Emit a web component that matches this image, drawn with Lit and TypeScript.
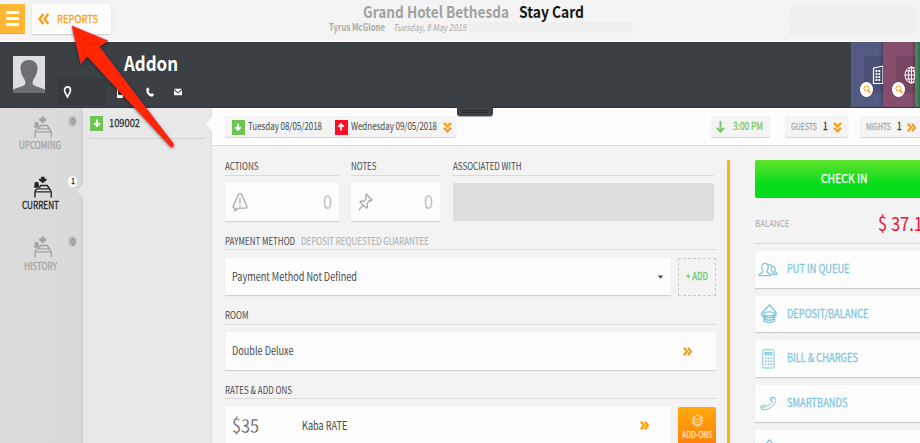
import { LitElement, html, css, svg, nothing, TemplateResult } from "lit";
import { customElement, property } from "lit/decorators.js";

// Condensed text run: the glyphs are squeezed into the given width,
// the box is exactly as high as a capital letter.
@customElement('fit-text')
export class FitText extends LitElement{
    static styles = css`
        :host{
            display: block;
            flex: none;
        }

        svg{
            display: block;
            overflow: visible;
        }

        text{
            fill: currentColor;
            stroke: var(--outline, none);
            stroke-width: var(--outline-width, 0);
        }
    `

    @property()
    text!: string;

    @property({ type: Number })
    width!: number;

    @property({ type: Number })
    cap = 7.3;

    render() {
        return html`
            <svg width=${this.width} height=${this.cap}>
                <text x="0" y=${this.cap} font-size=${this.cap / 0.733}
                      textLength=${this.width} lengthAdjust="spacingAndGlyphs">${this.text}</text>
            </svg>
        `
    }
}

const fit = (text: string, width: number, cap = 7.3, cls = '') =>
    html`<fit-text class=${cls} .text=${text} .width=${width} .cap=${cap}></fit-text>`;

const icon = (w: number, h: number, body: TemplateResult | unknown, cls = '') =>
    html`<svg class="icon ${cls}" width=${w} height=${h} viewBox="0 0 ${w} ${h}">${body}</svg>`;

const chevrons = (cls = '') => icon(9, 9, svg`<path d="M.9.7 4 4.5.9 8.3M4.900.7 8 4.500 4.900 8.300" stroke-width="2.200"/>`, `orange ${cls}`);
const chevronsDown = () => icon(9, 11, svg`<path d="M.9 1 4.5 4.4 8.1 1M.9 5.8 4.5 9.3 8.1 5.8" stroke-width="2.3"/>`, 'orange');
const arrowDown = () => icon(8, 8, svg`<path d="M4 .5v6.300M1.300 4.200 4 7l2.700-2.800" stroke-width="1.700"/>`);
const arrowUp = () => icon(8, 8, svg`<path d="M4 7.500V1.200M1.300 3.800 4 1l2.700 2.800" stroke-width="1.700"/>`);

const bed = () => icon(19, 22, svg`
    <path class="solid" d="M9.800 7.200 6 4.300V2.800h2V.7h3.600v2.100h2v1.500z"/>
    <path class="solid" d="M2 6h3.200l1.300 5.700H.9z"/>
    <path d="M6.500 11.800 7.600 9.500h6.600l2.400 3.200M2 21.500v-5.200q0-2 2-3.400h12.200q2 1.200 2 3.400v5.200M2.200 15.900h15.800" stroke-width="1.400"/>`);

const people = () => icon(20, 15, svg`
    <path stroke-width="1.200" d="M1 13.700c0-3 4-2.500 4.200-4.300C3 6.500 3.300 1.400 7 1.400S11 6.500 8.700 9.400c.2 1.800 4 1.300 4 4.300zM10 3.200c2.600-1.500 4.800 1.200 3 4.800.3 1.500 3 1.500 3.200 4.300h-3M14 4.500c2.400-.8 4 1.500 2.500 4.300.2 1.200 2.200 1.400 2.500 3.500h-2.500"/>`);
const coins = () => icon(17, 20, svg`
    <path d="M1 10 9.500.9 16 8.600v2.600l-1.500 1M1 10l3 3.500" stroke-width="1.400"/>
    <ellipse cx="9.300" cy="9.700" rx="5.200" ry="1.900" stroke-width="1.200"/>
    <path d="M4.100 9.700v7.300q5.200 3.200 10.400 0V9.700M4.100 12.200q5.200 3 10.400 0M4.100 14.700q5.200 3 10.400 0" stroke-width="1.400"/>`);
const calculator = () => icon(13, 20, svg`
    <rect x=".8" y=".8" width="11.200" height="18.200" rx="1.200"/>
    <rect class="tint" x="3" y="3.600" width="7" height="2.200"/>
    <path d="M3 9.200h7.500M3 12.200h7.500M3 15.200h7.500" stroke-width="1.600" stroke-dasharray="1.600 1.200"/>`);
const handset = () => icon(17, 15, svg`
    <path d="M1 10.200C.5 12.500 2 14.200 5.200 13.800 10.500 13 15.300 8.500 15.800 4.500L14.500 1.200 10.600 1.700l.1 3 1.800.8C11 8.300 8.500 10 5.700 10.300L4.600 8.700zM1 10.200l1 2 3.700-1.900M10.700 4.700 14.500 1.200"/>`);
const house = () => icon(17, 19, svg`<path d="M1 9.500 9.500.9 16 8.600" stroke-width="1.300"/>`);

const magnifier = () => icon(8, 9, svg`<circle cx="3.400" cy="3.400" r="2.500"/><path d="M5.200 5.500 7.200 8.200" stroke-width="1.500"/>`, 'orange');

@customElement('app-root')
export class AppRoot extends LitElement{
    static styles = css`
        :host{
            display: block;
            position: relative;
            width: 920px;
            height: 443px;
            overflow: hidden;
            background: #f3f3f3;
            color: #46484a;
            font-family: "Noto Sans CJK SC", "Open Sans", sans-serif;
        }

        *{
            box-sizing: border-box;
        }

        .icon{
            display: block;
            flex: none;
            fill: none;
            stroke: currentColor;
            stroke-width: 1;
        }

        .icon .solid{
            fill: currentColor;
            stroke: none;
        }

        .icon .tint{
            fill: #bfe1ec;
        }

        .orange{ color: #ff9c0c; }
        .green{ color: #76c765; }
        .grey{ color: #a9a9a9; }
        .bold{ font-weight: 700; }
        .italic{ font-style: italic; }

        .medium{
            --outline: currentColor;
            --outline-width: 0.28px;
        }

        .light{
            --outline: #fdfdfd;
            --outline-width: 0.35px;
        }

        .top{
            display: grid;
            grid-template-columns: 329px 460px 131px;
            height: 42px;
            background: #f4f4f4;
            border-bottom: 1px solid #fff;
        }

        .nav{
            display: flex;
            gap: 7px;
            padding-top: 4px;
        }

        .burger{
            display: flex;
            flex-direction: column;
            justify-content: center;
            gap: 3px;
            width: 25px;
            height: 29px;
            padding-left: 6px;
            background: #ffb734;
            box-shadow: 0 1px 1px #d5a650;
            border-radius: 0 1px 1px 0;
        }

        .burger i{
            width: 13px;
            height: 3px;
            background: #fff;
            border-radius: 1px;
        }

        .reports{
            display: flex;
            align-items: center;
            gap: 7px;
            width: 79px;
            height: 30px;
            padding: 0 0 1px 6px;
            background: #fdfdfd;
            border-radius: 1px;
            box-shadow: 0 1px 2px #ccc;
        }

        .titles{
            display: flex;
            flex-direction: column;
            gap: 6px;
            padding-top: 6px;
        }

        .title{
            display: flex;
            gap: 10px;
            padding-left: 34px;
            color: #a1a1a1;
        }

        .title .dark{
            color: #151515;
        }

        .subtitle{
            display: flex;
            gap: 8px;
            color: #aaa;
        }

        .blank{
            width: 165px;
            height: 11px;
            margin: -2px 0 -4px -6px;
            background: #efefef;
        }

        .cloud{
            width: 128px;
            height: 31px;
            margin-top: 5px;
            background: #efefef;
            border-radius: 8px;
        }

        .guest{
            display: flex;
            height: 66px;
            background: #3b4044;
            border-bottom: 1px solid #32363a;
            color: #fff;
        }

        .avatar{
            width: 32px;
            height: 37px;
            margin: 14px 13px 0;
            background: #dedede;
        }

        .contact{
            display: flex;
            flex-direction: column;
            flex: 1;
            padding-top: 14px;
        }

        .name{
            padding-left: 66px;
        }

        .links{
            display: flex;
            align-items: center;
            height: 26px;
            margin-top: 8px;
        }

        .address{
            display: flex;
            align-items: center;
            width: 49px;
            height: 26px;
            margin-right: 10px;
            padding-left: 5px;
            background: #373b3f;
        }

        .mobile{ margin-right: 23px; }
        .phone{ margin-right: 20px; }

        .module{
            display: flex;
            flex: none;
            flex-direction: column;
            width: 32px;
            padding: 14px 0 0 13px;
            overflow: hidden;
            box-shadow: inset -3px 0 3px -2px rgba(0, 0, 0, 0.3);
        }

        .module.purple{ background: #555a83; }
        .module.plum{ background: #854e6c; }
        .module.teal{ width: 5px; padding: 0; background: #46855f; }

        .tile{
            display: flex;
            align-items: center;
            width: 30px;
            height: 37px;
            flex: none;
            padding-left: 8px;
            background: rgba(0, 0, 0, 0.1);
        }

        .lens{
            display: flex;
            align-items: center;
            justify-content: center;
            flex: none;
            width: 13px;
            height: 15px;
            margin: -11px 0 0 -4px;
            background: #fff;
            border-radius: 50%;
        }

        .body{
            display: grid;
            grid-template-columns: 83px 129px 708px;
            height: 335px;
        }

        .periods{
            background: linear-gradient(90deg, #dcdcdc, #dadada 93%, #d2d2d2);
            padding-top: 7.500px;
        }

        .period{
            position: relative;
            display: flex;
            flex-direction: column;
            align-items: center;
            gap: 4.500px;
            height: 60.300px;
            padding-right: 3px;
            color: #a3a3a3;
        }

        .period .icon{
            margin-left: 4px;
        }

        .period.active{
            color: #262626;
        }

        .badge{
            position: absolute;
            left: 68px;
            top: 0;
            display: flex;
            align-items: center;
            justify-content: center;
            width: 9px;
            height: 11px;
            border-radius: 50%;
            background: #bebebe;
            color: #888;
        }

        .active .badge{
            background: #fff;
            color: #222;
        }

        .active::after{
            content: '';
            position: absolute;
            left: 77px;
            top: 8px;
            border: solid transparent;
            border-width: 7px 6px 7px 0;
            border-right-color: #e8e8e8;
        }

        .stays{
            padding: 0 6px 0 7px;
            background: #e8e8e8;
            border-right: 1px solid #dedede;
        }

        .stay{
            position: relative;
            display: flex;
            align-items: center;
            gap: 6px;
            height: 31px;
            border-bottom: 1px solid #d2d2d2;
            color: #333;
        }

        .stay::after{
            content: '';
            position: absolute;
            right: -7px;
            top: 9px;
            border: solid transparent;
            border-width: 7px 6px 7px 0;
            border-right-color: #fdfdfd;
        }

        .flag{
            display: flex;
            align-items: center;
            justify-content: center;
            width: 13px;
            height: 15px;
            background: #6fc554;
            color: #fff;
        }

        .flag.out{
            background: #fb0d22;
        }

        .dates{
            display: flex;
            align-items: flex-start;
            height: 38px;
            padding: 8px 0 0 13px;
            background: #fdfdfd;
            border-bottom: 1px solid #dcdcdc;
        }

        .pill{
            display: flex;
            align-items: center;
            flex: none;
            height: 21px;
            padding-top: 1px;
            background: #f4f4f4;
            border-radius: 2px;
            box-shadow: 0 1px 1px #d4d4d4;
        }

        .range{
            width: 231px;
            gap: 3px;
            padding-left: 6.500px;
            margin-right: 255px;
        }

        .range .out{ margin-left: 10px; }
        .range .orange{ margin-left: 3px; }

        .time{
            width: 59px;
            gap: 8px;
            padding-left: 5px;
            margin-right: 15px;
        }

        .count{
            width: 63px;
            gap: 6px;
            padding-left: 6px;
            margin-right: 12px;
        }

        .count .orange{ margin-left: -1px; }

        .count fit-text + fit-text{ color: #333; }

        .columns{
            display: grid;
            grid-template-columns: 491px 3px 1fr;
            padding: 14px 0 0 13px;
            height: 297px;
        }

        .row{
            display: flex;
            gap: 12px;
        }

        .section{
            height: 74.500px;
        }

        .head{
            display: flex;
            gap: 6px;
            height: 15.500px;
            padding-top: 3px;
            border-bottom: 1px solid #dadada;
        }

        .line{
            display: flex;
            gap: 7px;
            margin-top: 7.500px;
        }

        .card{
            display: flex;
            align-items: center;
            flex: 1;
            height: 37.500px;
            padding: 1px 7px 0;
            background: #fdfdfd;
            border-radius: 1px;
            box-shadow: 0 1px 1px #ccc;
        }

        .split{ justify-content: space-between; }

        .actions{ width: 114px; }
        .notes{ width: 89px; margin-right: 0.500px; }
        .linked{ width: 261px; }
        .linked .card{ background: #dedede; box-shadow: none; }

        .room{ padding-right: 24px; }
        .rate{ padding-right: 22px; }
        .price{ margin-right: 43px; }
        .push{ margin-left: auto; }

        .add{
            display: flex;
            align-items: center;
            justify-content: center;
            width: 38px;
            height: 38px;
            border: 1px dashed #cbcbcb;
        }

        .addons{
            display: flex;
            flex-direction: column;
            align-items: center;
            gap: 4px;
            width: 38px;
            height: 40px;
            padding-top: 7px;
            background: linear-gradient(#ffab0b, #ff7d0d);
            border-radius: 2px;
            color: #ffe3b8;
        }

        .divider{
            margin-left: 10.500px;
            width: 3px;
            background: #ffae12;
            border-radius: 2px 2px 0 0;
        }

        .side{
            padding-left: 35.500px;
        }

        .checkin{
            display: flex;
            align-items: center;
            width: 180px;
            height: 37.500px;
            padding-left: 66px;
            background: linear-gradient(#60e22b, #04dc1c 65%);
            border-radius: 2px;
            color: #fff;
        }

        .balance{
            display: flex;
            align-items: center;
            height: 46px;
            padding-top: 6px;
            gap: 89px;
            border-bottom: 1px solid #d8d8d8;
            margin-bottom: 7.500px;
        }

        .amount{ color: #ee1133; }

        .task{
            display: flex;
            align-items: center;
            height: 36.500px;
            width: 200px;
            margin-bottom: 8.200px;
            background: #fdfdfd;
            box-shadow: 0 1px 1px #ccc;
            color: #7fc5dc;
        }

        .glyph{
            display: flex;
            justify-content: center;
            width: 27px;
            margin-right: 5px;
        }

        .handle{
            position: absolute;
            left: 457px;
            top: 107px;
            display: flex;
            flex-direction: column;
            align-items: center;
            gap: 1px;
            width: 36px;
            height: 9px;
            padding-top: 3px;
            background: #3b4044;
            border-radius: 0 0 3px 3px;
            box-shadow: 0 1px 1px #aaa;
        }

        .handle i{
            width: 26px;
            height: 1px;
            background: #2b2f32;
        }

        .pointer{
            position: absolute;
            left: 60px;
            top: 15px;
            filter: drop-shadow(0 1px 1.500px rgba(0, 0, 0, 0.5));
        }
    `

    periods = [
        { name: 'UPCOMING', width: 42, count: '0' },
        { name: 'CURRENT', width: 37, count: '1', active: true },
        { name: 'HISTORY', width: 33, count: '0' }
    ]

    tasks = [
        { name: 'PUT IN QUEUE', width: 62.5, icon: people },
        { name: 'DEPOSIT/BALANCE', width: 81.5, icon: coins },
        { name: 'BILL & CHARGES', width: 71, icon: calculator },
        { name: 'SMARTBANDS', width: 60.5, icon: handset },
        { name: '', width: 0, icon: house }
    ]

    render() {
        return html`
            ${this._top()}
            ${this._guest()}
            <div class="body">
                <div class="periods">
                    ${this.periods.map(p => html`
                        <div class="period ${p.active ? 'active' : ''}">
                            ${bed()}
                            ${fit(p.name, p.width, 7.3, 'medium')}
                            <span class="badge">${fit(p.count, 4, 6, 'medium')}</span>
                        </div>
                    `)}
                </div>
                <div class="stays">
                    <div class="stay">
                        <span class="flag">${arrowDown()}</span>
                        ${fit('109002', 31, 7.8, 'medium')}
                    </div>
                </div>
                <div>
                    ${this._dates()}
                    <div class="columns">
                        ${this._details()}
                        <div class="divider"></div>
                        ${this._side()}
                    </div>
                </div>
            </div>
            <div class="handle"><i></i><i></i></div>
            <svg class="pointer" width="120" height="140" viewBox="60 15 120 140">
                <path d="M72 26 108 41 99 46.500 173.500 144q.5 3.500-2.500 3L87 56l-6 8z"
                      fill="#ff2600" stroke="#f5204a" stroke-width=".7" stroke-linejoin="round"/>
            </svg>
        `
    }

    _top() {
        return html`
            <div class="top">
                <div class="nav">
                    <div class="burger"><i></i><i></i><i></i></div>
                    <div class="reports orange">
                        ${icon(12, 12, svg`<path d="M5.300 1 1.500 6l3.800 5M10.300 1 6.500 6l3.800 5" stroke-width="2.300"/>`)}
                        ${fit('REPORTS', 41, 8, 'medium')}
                    </div>
                </div>
                <div class="titles">
                    <div class="title">
                        ${fit('Grand Hotel Bethesda', 146, 11.5, 'bold')}
                        ${fit('Stay Card', 65, 11.5, 'bold dark')}
                    </div>
                    <div class="subtitle">
                        ${fit('Tyrus McGlone', 56, 7, 'bold')}
                        ${fit('Tuesday, 8 May 2018', 73, 7, 'italic')}
                        <div class="blank"></div>
                    </div>
                </div>
                <div class="cloud"></div>
            </div>
        `
    }

    _guest() {
        return html`
            <div class="guest">
                <svg class="avatar" viewBox="0 0 32 37">
                    <path fill="#6b6e73" d="M0 37v-3c2-2.500 8-2.500 11.500-5 1.500-1.500 1-3.500 0-5.500C9 20 7.500 16 7.500 12c0-5 3.500-8 8.500-8s8.500 3 8.500 8c0 4-1.500 8-4 11.500-1 2-1.500 4 0 5.500 3.500 2.500 9.500 2.500 11.500 5v3z"/>
                </svg>
                <div class="contact">
                    <div class="name">${fit('Addon', 54, 14.6, 'bold')}</div>
                    <div class="links">
                        <span class="address">
                            ${icon(9, 12, svg`<path d="M4.500 11C3.500 8.500 1.500 6.500 1.500 4.200 1.500 2 2.800.9 4.500.9s3 1.100 3 3.300c0 2.300-2 4.300-3 6.800z" stroke-width="1.600"/>`)}
                        </span>
                        ${icon(6, 12, svg`<path class="solid" fill-rule="evenodd" d="M.8 0h4.400q.8 0 .8.800v10.400q0 .8-.8.800H.8q-.8 0-.8-.8V.8Q0 0 .8 0zM1 2v7h4V2z"/>`, 'mobile')}
                        ${icon(8, 10, svg`<path class="solid" d="M.5 1.500 2 .3l1.500 2.700-1 1.200c.5 1.500 1.500 2.500 2.500 2.800L6 5.900l2 1.500-1.200 2C3 10.200-.5 5.500.5 1.500z"/>`, 'phone')}
                        ${icon(8, 8, svg`<path class="solid" d="M0 .8h8L4 4.200zM0 2.200l4 3.300 4-3.300v5H0z"/>`)}
                    </div>
                </div>
                <div class="module purple">
                    <span class="tile">${icon(14, 20, svg`<path d="M1.500 3.200 11 1v17.500H1.500z" stroke-width="1.200"/><path d="M4.500 5v11M7.300 5v11" stroke-width="1.800" stroke-dasharray="2 1"/>`)}</span>
                    <span class="lens">${magnifier()}</span>
                </div>
                <div class="module plum">
                    <span class="tile">${icon(16, 18, svg`<ellipse cx="7.500" cy="9" rx="6.500" ry="8"/><ellipse cx="7.500" cy="9" rx="3" ry="8"/><path d="M7.500 1v16M1 9h13M2 5h11M2 13h11"/>`)}</span>
                    <span class="lens">${magnifier()}</span>
                </div>
                <div class="module teal"></div>
            </div>
        `
    }

    _dates() {
        return html`
            <div class="dates">
                <div class="pill range">
                    <span class="flag">${arrowDown()}</span>
                    ${fit('Tuesday 08/05/2018', 74)}
                    <span class="flag out">${arrowUp()}</span>
                    ${fit('Wednesday 09/05/2018', 86)}
                    ${chevronsDown()}
                </div>
                <div class="pill time green">
                    ${icon(9, 12, svg`<path d="M4.500 0v10.500M1 7l3.500 3.700L8 7" stroke-width="1.900"/>`)}
                    ${fit('3:00 PM', 30, 7.3, 'medium')}
                </div>
                <div class="pill count grey">
                    ${fit('GUESTS', 26, 6.4, 'medium')}
                    ${fit('1', 4.5, 7.3, 'medium')}
                    ${chevronsDown()}
                </div>
                <div class="pill count grey">
                    ${fit('NIGHTS', 25, 6.4, 'medium')}
                    ${fit('1', 4.5, 7.3, 'medium')}
                    ${chevrons()}
                </div>
            </div>
        `
    }

    _head(title: string, width: number, note?: TemplateResult) {
        return html`<div class="head">${fit(title, width)}${note ?? nothing}</div>`
    }

    _details() {
        return html`
            <div>
                <div class="section row">
                    <div class="actions">
                        ${this._head('ACTIONS', 33.5)}
                        <div class="line"><div class="card split grey">
                            ${icon(16, 20, svg`<path d="M8 1.300c1 0 1.500.8 2 2l4.700 10.500c.5 1.400 0 2.400-1.400 2.400H6l-3 2.600v-2.600c-1.600 0-2.200-1-1.600-2.400L6 3.300c.5-1.200 1-2 2-2z" stroke-width="1.300"/><path d="M8 5.500v6M8 12.800v1.600" stroke-width="1.300"/>`)}
                            ${fit('0', 9, 14, 'light')}
                        </div></div>
                    </div>
                    <div class="notes">
                        ${this._head('NOTES', 25.5)}
                        <div class="line"><div class="card split grey">
                            ${icon(15, 18, svg`<path d="M8.500 1.200 13.800 7l-1.500 1.200-1-.5-2.100 3 .3 3.300-1 1L2 9.200l1-1.200 2.800.3 2.600-2.700-.8-2.400zM5.200 12.300.8 17" stroke-width="1.300"/>`)}
                            ${fit('0', 9, 14, 'light')}
                        </div></div>
                    </div>
                    <div class="linked">
                        ${this._head('ASSOCIATED WITH', 68.5)}
                        <div class="line"><div class="card"></div></div>
                    </div>
                </div>
                <div class="section">
                    ${this._head('PAYMENT METHOD', 70, fit('DEPOSIT REQUESTED GUARANTEE', 128, 7.3, 'grey'))}
                    <div class="line">
                        <div class="card">
                            ${fit('Payment Method Not Defined', 125, 8.4)}
                            ${icon(7, 4, svg`<path class="solid" d="M.8.500h5.400L3.500 3.700z"/>`, 'push')}
                        </div>
                        <div class="add green">${fit('+ ADD', 22, 7.3, 'medium')}</div>
                    </div>
                </div>
                <div class="section">
                    ${this._head('ROOM', 23.5)}
                    <div class="line">
                        <div class="card room">
                            ${fit('Double Deluxe', 61.5, 8.4)}
                            ${chevrons('push')}
                        </div>
                    </div>
                </div>
                <div class="section">
                    ${this._head('RATES & ADD ONS', 67)}
                    <div class="line">
                        <div class="card rate">
                            ${fit('$35', 27, 14.6, 'price light')}
                            ${fit('Kaba RATE', 45.5, 8.4)}
                            ${chevrons('push')}
                        </div>
                        <div class="addons">
                            ${icon(11, 13, svg`<path d="M5.500.8 10 3.300 5.500 5.800 1 3.300zM1 3.300v2.500l4.500 2.700L10 5.800V3.300M1 6v2.500l4.500 2.600L10 8.500V6M1 8.500v1.200l4.500 2.700L10 9.700V8.500"/>`)}
                            ${fit('ADD-ONS', 30.5, 6.8, 'medium')}
                        </div>
                    </div>
                </div>
            </div>
        `
    }

    _side() {
        return html`
            <div class="side">
                <div class="checkin">${fit('CHECK IN', 46.5, 9, 'medium')}</div>
                <div class="balance">
                    ${fit('BALANCE', 34.5, 6.8, 'grey')}
                    ${fit('$ 37.1', 45, 14.6, 'amount')}
                </div>
                ${this.tasks.map(t => html`
                    <div class="task">
                        <span class="glyph">${t.icon()}</span>
                        ${t.name ? fit(t.name, t.width, 8.4, 'medium') : nothing}
                    </div>
                `)}
            </div>
        `
    }
}
